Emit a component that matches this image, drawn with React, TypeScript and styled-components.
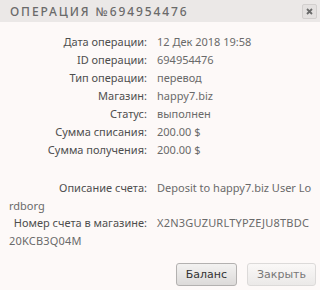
import React from "react";
import styled, { createGlobalStyle } from "styled-components";

const Global = createGlobalStyle`
  html, body { margin: 0; padding: 0; background: #fdf9f8; }
  * { box-sizing: border-box; }
`;

const Dialog = styled.div`
  width: 320px;
  background: #fdf9f8;
  font-family: "Noto Sans", "Open Sans", sans-serif;
  color: #585858;
`;

const TitleBar = styled.div`
  height: 22px;
  background: #ebe8e7;
  display: flex;
  align-items: center;
  justify-content: space-between;
  padding: 0 3px 0 10px;
`;

const Title = styled.div`
  font-size: 12px;
  letter-spacing: 1.9px;
  text-transform: uppercase;
  color: #6a6a6a;
  font-weight: 500;
`;

const CloseBtn = styled.div`
  width: 15px;
  height: 15px;
  border: 1px solid #d2cfce;
  border-radius: 2px;
  background: #e4e1e0;
  display: flex;
  align-items: center;
  justify-content: center;
`;

const Body = styled.div`
  padding: 11px 8px 0 9px;
  font-size: 11px;
`;

const Row = styled.div<{ $lh?: number; $mt?: number }>`
  line-height: ${(p) => p.$lh ?? 18}px;
  margin-top: ${(p) => p.$mt ?? 0}px;
  word-break: break-all;
`;

const Label = styled.span`
  display: inline-block;
  width: 138px;
  text-align: right;
  margin-right: 10px;
  color: #4e4e4e;
  word-break: normal;
`;

const Value = styled.span<{ $spaced?: boolean }>`
  color: #6a6a6a;
  letter-spacing: ${(p) => (p.$spaced ? "0.2px" : "normal")};
`;

const Footer = styled.div`
  display: flex;
  justify-content: flex-end;
  gap: 10px;
  margin-top: 14px;
  padding-right: 4px;
`;

const Button = styled.button<{ $muted?: boolean }>`
  height: 23px;
  padding: 0 9px;
  font-family: "DejaVu Sans", Verdana, sans-serif;
  font-size: 11px;
  border-radius: 3px;
  color: ${(p) => (p.$muted ? "#777" : "#333")};
  border: 1px solid ${(p) => (p.$muted ? "#dcdad9" : "#b3b1b0")};
  background: ${(p) =>
    p.$muted
      ? "linear-gradient(#faf8f7, #ebe9e8)"
      : "linear-gradient(#f3f2f1, #dcdad9)"};
`;

const rows: [string, string][] = [
  ["Дата операции:", "12 Дек 2018 19:58"],
  ["ID операции:", "694954476"],
  ["Тип операции:", "перевод"],
  ["Магазин:", "happy7.biz"],
  ["Статус:", "выполнен"],
  ["Сумма списания:", "200.00 $"],
  ["Сумма получения:", "200.00 $"],
];

export default function App() {
  return (
    <Dialog>
      <Global />
      <TitleBar>
        <Title>Операция №694954476</Title>
        <CloseBtn>
          <svg width="7" height="7" viewBox="0 0 7 7">
            <path d="M1 1L6 6M6 1L1 6" stroke="#6a6a6a" strokeWidth="1.8" />
          </svg>
        </CloseBtn>
      </TitleBar>
      <Body>
        {rows.map(([l, v]) => (
          <Row key={l}>
            <Label>{l}</Label>
            <Value>{v}</Value>
          </Row>
        ))}
        <Row $lh={17.5} $mt={20}>
          <Label>Описание счета:</Label>
          <Value>Deposit to happy7.biz User Lordborg</Value>
        </Row>
        <Row $lh={17.5}>
          <Label>Номер счета в магазине:</Label>
          <Value $spaced>X2N3GUZURLTYPZEJU8TBDC20KCB3Q04M</Value>
        </Row>
      </Body>
      <Footer>
        <Button>Баланс</Button>
        <Button $muted>Закрыть</Button>
      </Footer>
    </Dialog>
  );
}
